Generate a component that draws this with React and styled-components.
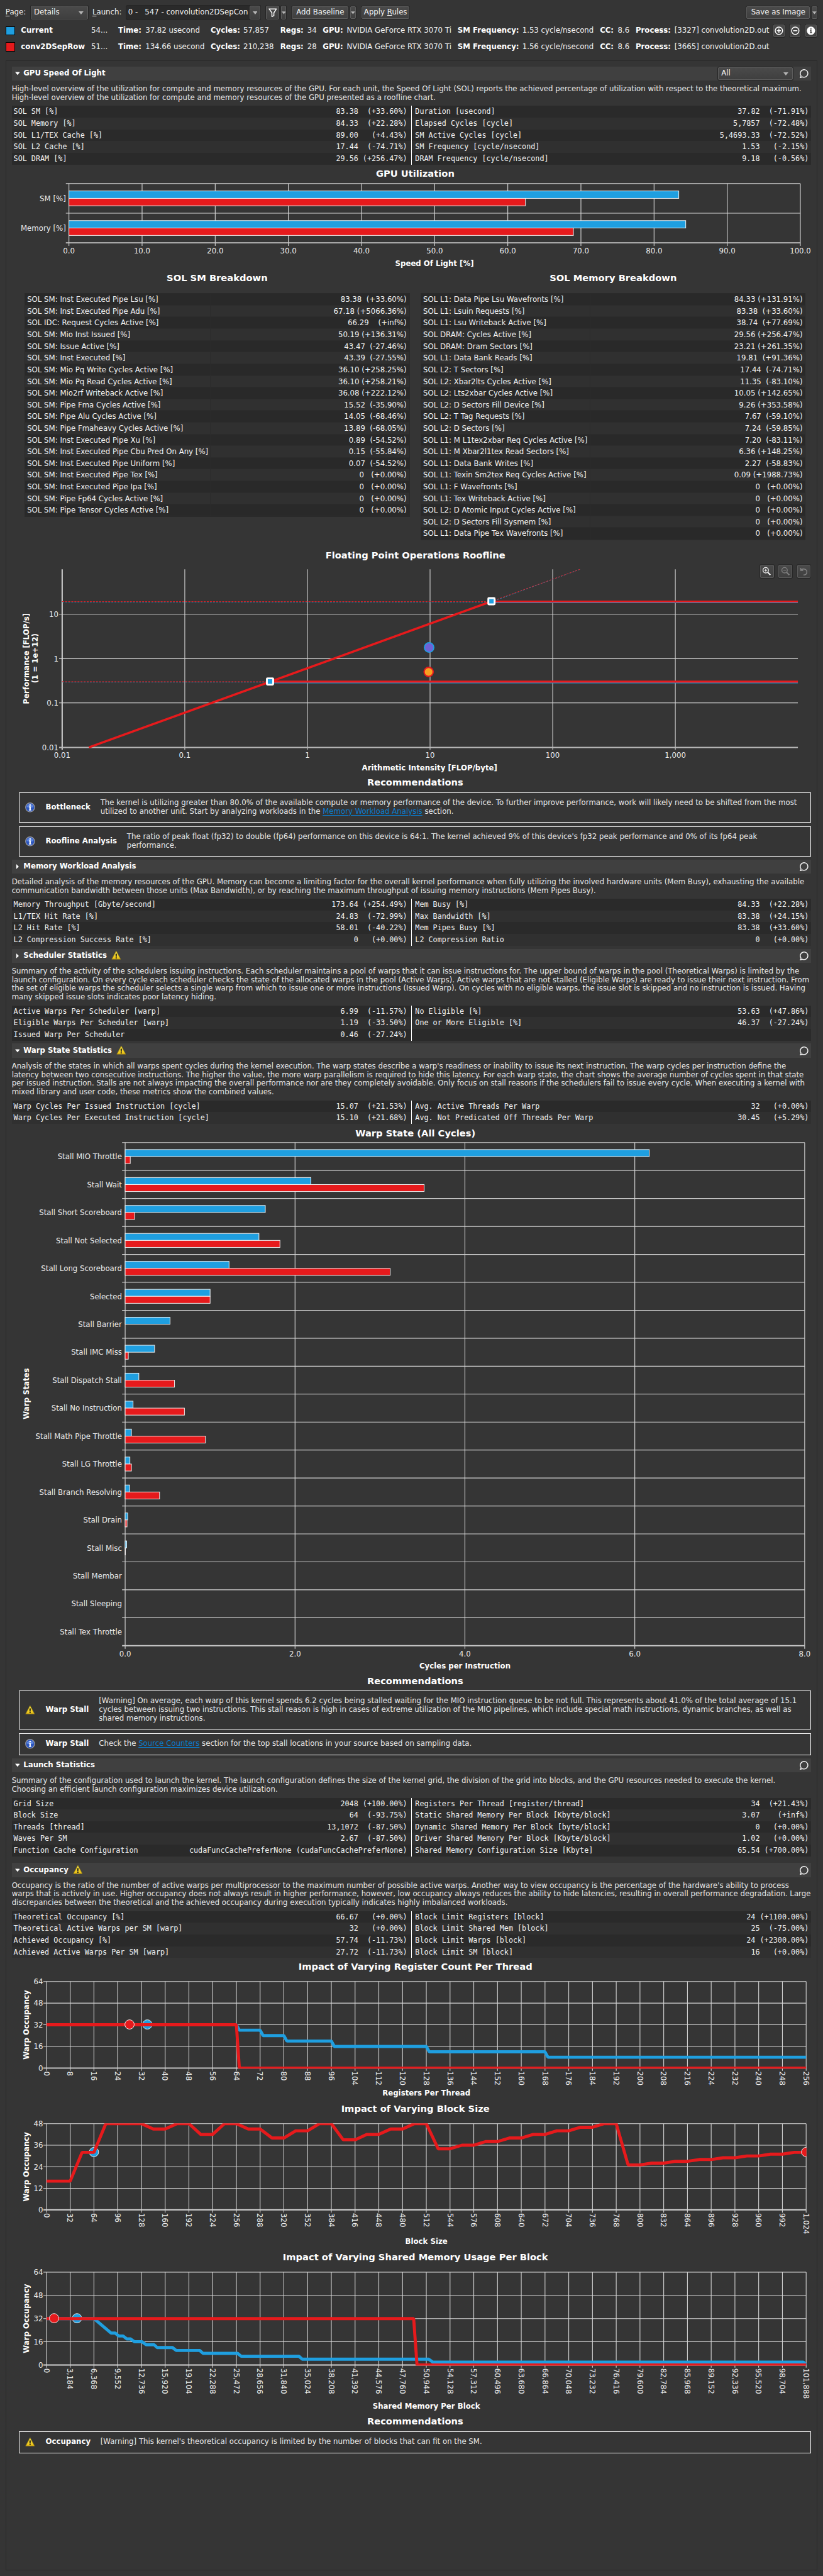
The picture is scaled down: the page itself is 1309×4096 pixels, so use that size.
import React from "react";
import styled, { createGlobalStyle } from "styled-components";

const BLUE = "#1f9fe0";
const RED = "#e61a1c";
const GRID = "#d6d6d6";
const SANS = '"DejaVu Sans", Verdana, sans-serif';
const MONO = '"DejaVu Sans Mono", monospace';

const GlobalStyle = createGlobalStyle`
  * { box-sizing: border-box; }
  html, body { margin: 0; padding: 0; background: #353535; }
  body { overflow: hidden; }
`;

const Page = styled.div`
  zoom: 0.9797;
  width: 1336px;
  height: 4181px;
  padding: 9px 9px 0;
  background: #353535;
  color: #f2f2f2;
  font: 12px/14px ${SANS};
  white-space: nowrap;
`;

/* ---------- toolbar ---------- */

const Toolbar = styled.div`
  display: flex;
  align-items: center;
  height: 23px;
  font-size: 12px;
`;

const ToolLabel = styled.span`
  width: ${(p) => p.$w}px;
  margin-left: ${(p) => p.$ml || 0}px;
  u { text-underline-offset: 2px; }
`;

const Button = styled.button`
  display: flex;
  align-items: center;
  justify-content: ${(p) => (p.$spread ? "space-between" : "center")};
  width: ${(p) => p.$w}px;
  height: ${(p) => p.$h || 21}px;
  margin: 0 0 0 ${(p) => p.$ml || 0}px;
  padding: ${(p) => (p.$spread ? "0 6px 0 4px" : "0")};
  color: ${(p) => (p.$dim ? "#808080" : "#f2f2f2")};
  font: 12px/14px ${SANS};
  background: linear-gradient(#4a4a4a, #3f3f3f);
  border: 1px solid #5c5c5c;
  border-radius: 2px;
  box-shadow: 0 0 0 1px #262626;
`;

const Combo = styled.div`
  display: flex;
  align-items: center;
  width: 218px;
  height: 22px;
  margin-left: 1px;
  background: #2a2a2a;
  border-radius: 2px;
  box-shadow: 0 0 0 1px #262626;
  white-space: pre;
`;

const ComboText = styled.span`
  flex: 1;
  overflow: hidden;
  padding-left: 3px;
`;

const Spacer = styled.div`
  flex: 1;
`;

const Arrow = () => (
  <svg width="8" height="5" viewBox="0 0 8 5">
    <path d="M0 0H8L4 5Z" fill="#b4b4b4" />
  </svg>
);

/* ---------- launch legend ---------- */

const Legend = styled.div`
  display: grid;
  grid-template-columns: 25px 114px 44px 44px 106px 53px 60px 44px 25px 39px 180px 105px 126px 29px 29px 63px 161px 26px 26px 18px;
  grid-auto-rows: 26px;
  align-items: center;
  margin-top: 5px;
  strong { color: #fff; }
`;

const Swatch = styled.i`
  width: 15px;
  height: 15px;
  background: ${(p) => p.$color};
  border: 1px solid #000;
`;

const Blank = styled.span`
  grid-column: span 3;
`;

/* ---------- report panel ---------- */

const Panel = styled.main`
  margin-top: 9px;
  height: 4074px;
  padding: 9px 9px 0;
  border: 1px solid #292929;
`;

const Header = styled.header`
  display: flex;
  align-items: center;
  height: 23px;
  margin-top: ${(p) => p.$mt || 0}px;
  padding: 0 4px 0 5px;
  background: #404040;
  font-weight: bold;
  color: #fff;
`;

const Disclosure = styled.span`
  display: flex;
  width: 14px;
`;

const HeaderIcon = styled.span`
  display: flex;
  margin-left: 7px;
  padding-bottom: 2px;
`;

const FilterBox = styled.span`
  display: flex;
  margin-right: 10px;
`;

const Description = styled.p`
  margin: 0;
  padding: 7px 0 6px;
  color: #e8e8e8;
`;

const MetricTable = styled.section`
  display: grid;
  grid-template-columns: 649px 649px;
  font-family: ${MONO};
  background: #2a2a2a;
`;

const MetricColumn = styled.div`
  border-left: ${(p) => (p.$second ? "1px solid #fff" : "none")};
`;

const MetricRow = styled.div`
  display: flex;
  justify-content: space-between;
  height: 19px;
  padding: 0 ${(p) => (p.$second ? 4 : 7)}px 0 ${(p) => (p.$second ? 5 : 3)}px;
  line-height: 19px;
  white-space: pre;
  background: ${(p) => (p.$alt ? "#303030" : "#2a2a2a")};
`;

const Breakdowns = styled.section`
  display: grid;
  grid-template-columns: 625px 625px;
  column-gap: 18px;
  height: 448px;
  padding-left: 21px;
  align-items: start;
`;

const BlockTitle = styled.h2`
  margin: 0;
  height: ${(p) => p.$h}px;
  padding-left: ${(p) => p.$shift || 0}px;
  text-align: center;
  font: bold 15px/18px ${SANS};
  color: #fff;
`;

const BreakdownTable = styled.div`
  border: 1px solid #2a2a2a;
`;

const BreakdownRow = styled.div`
  display: grid;
  grid-template-columns: ${(p) => p.$split}px 1fr;
  height: 19px;
  line-height: 19px;
  background: ${(p) => (p.$alt ? "#303030" : "#292929")};
  border-bottom: 1px solid #2c2c2c;
  white-space: pre;
`;

const BreakdownCell = styled.span`
  height: 18px;
  padding: 0 4px 0 ${(p) => (p.$value ? 0 : 3)}px;
  text-align: ${(p) => (p.$value ? "right" : "left")};
  border-left: ${(p) => (p.$value ? "1px solid #2b2b2b" : "none")};
`;

const ChartFrame = styled.figure`
  position: relative;
  margin: 0;
  height: ${(p) => p.$h}px;
`;

const ChartSvg = styled.svg`
  display: block;
  font: 12px ${SANS};
  fill: #f0f0f0;
  overflow: hidden;
`;

const ChartTools = styled.div`
  position: absolute;
  right: 1px;
  top: ${(p) => p.$top}px;
  display: flex;
  gap: 8px;
`;

const Advice = styled.div`
  display: flex;
  align-items: center;
  width: 1286px;
  height: ${(p) => (p.$lines === 1 ? 36 : p.$lines * 14 + 21)}px;
  margin: 0 0 ${(p) => (p.$last ? 0 : 6)}px 12px;
  padding-left: 9px;
  border: 1px solid #fff;
  color: #e8e8e8;
`;

const AdviceName = styled.strong`
  width: ${(p) => p.$w}px;
  margin-left: 17px;
  color: #fff;
`;

const Link = styled.a`
  color: #0a7bcb;
  text-decoration: underline;
  text-underline-offset: 2px;
`;

/* ---------- icons ---------- */

const Comment = () => (
  <svg width="16" height="16" viewBox="0 0 16 16" fill="none" stroke="#f2f2f2" strokeWidth="1.5">
    <path d="M3.1 11.6A6.2 6.2 0 1 1 5.6 13.6L1.8 14.6Q3.2 13.3 3.1 11.6Z" strokeLinejoin="round" />
  </svg>
);

const Warning = () => (
  <svg width="16" height="16" viewBox="0 0 16 16">
    <defs>
      <linearGradient id="warn" x1="0" y1="0" x2="0" y2="1">
        <stop offset="0" stopColor="#fff04a" />
        <stop offset="1" stopColor="#e9bd12" />
      </linearGradient>
    </defs>
    <path d="M8 1L15.2 14.5H.8Z" fill="url(#warn)" stroke="#8f7a1c" strokeWidth=".9" strokeLinejoin="round" />
    <path d="M6.9 5.6H9.1L8.8 10.6H7.2Z" fill="#1c1c1c" />
    <rect x="7" y="11.5" width="2" height="1.8" fill="#1c1c1c" />
  </svg>
);

const Info = () => (
  <svg width="16" height="16" viewBox="0 0 16 16">
    <circle cx="8" cy="8" r="7.3" fill="#2c56bd" stroke="#9b9da3" strokeWidth="1.2" />
    <path d="M2.4 7.5A5.7 5.7 0 0 1 13.6 7.5Q8 9.5 2.4 7.5Z" fill="#5b84df" />
    <rect x="6.9" y="3" width="2.2" height="2.2" fill="#fff" />
    <path d="M6.2 6.4H9.1V11.8H10V13H6V11.8H6.9V7.6H6.2Z" fill="#fff" />
  </svg>
);

const Funnel = () => (
  <svg width="14" height="15" viewBox="0 0 14 15" fill="none" stroke="#fff" strokeWidth="1.5" strokeLinejoin="round">
    <path d="M1 1.2H13L8.8 7.4V12.2L5.6 13.6V7.4Z" />
  </svg>
);

const RoundIcon = ({ kind }) => (
  <svg width="14" height="14" viewBox="0 0 14 14" fill="none" stroke="#fff" strokeWidth="1.5">
    <circle cx="7" cy="7" r="6" fill={kind === "info" ? "#fff" : "none"} />
    {kind !== "info" && <path d="M3.6 7H10.4" />}
    {kind === "plus" && <path d="M7 3.6V10.4" />}
    {kind === "info" && <path d="M7 3V4.8M5.7 6.4H7V10M5.4 10.2H8.7" stroke="#3c3c3c" />}
  </svg>
);

const Magnifier = ({ plus }) => (
  <svg width="15" height="15" viewBox="0 0 15 15" fill="none" stroke="currentColor" strokeWidth="1.4">
    <circle cx="6" cy="5.8" r="4.4" />
    <path d="M9.2 9.2L13.6 13.6" strokeWidth="2" />
    <path d={plus ? "M3.9 5.8H8.1M6 3.7V7.9" : "M3.9 5.8H8.1"} strokeWidth="1.2" />
  </svg>
);

const Undo = () => (
  <svg width="14" height="14" viewBox="0 0 14 14" fill="none" stroke="currentColor" strokeWidth="1.6">
    <path d="M1.6 1V5H5.6M2 4.6C5.2 1.2 11.6 2.6 11.6 7.6C11.6 10.6 9.4 12.4 6 12.6" />
  </svg>
);

const Triangle = ({ open }) => (
  <svg width="8" height="8" viewBox="0 0 8 8">
    <path d={open ? "M0 1.5H8L4 6.5Z" : "M2 0L6 4L2 8Z"} fill="#fff" />
  </svg>
);

/* ---------- composed parts ---------- */

const SectionHeader = ({ title, open, warning, mt, children }) => (
  <Header $mt={mt}>
    <Disclosure><Triangle open={open} /></Disclosure>
    {title}
    {warning && <HeaderIcon><Warning /></HeaderIcon>}
    <Spacer />
    {children}
    <Comment />
  </Header>
);

const format = (value, pct) => `${value} ${pct.padStart(10)}`;

const Metrics = ({ left, right }) => {
  const column = (rows, second) => (
    <MetricColumn $second={second}>
      {rows.map(([name, value, pct], i) => (
        <MetricRow key={name} $alt={i % 2 === 1} $second={second}>
          <span>{name}</span>
          <span>{format(value, pct)}</span>
        </MetricRow>
      ))}
    </MetricColumn>
  );
  return (
    <MetricTable>
      {column(left, false)}
      {column(right, true)}
    </MetricTable>
  );
};

const Breakdown = ({ title, rows, split, shift }) => (
  <div>
    <BlockTitle $h={34} $shift={shift}>{title}</BlockTitle>
    <BreakdownTable>
      {rows.map(([name, value, pct], i) => (
        <BreakdownRow key={name} $alt={i % 2 === 1} $split={split}>
          <BreakdownCell>{name} [%]</BreakdownCell>
          <BreakdownCell $value>{format(value, pct)}</BreakdownCell>
        </BreakdownRow>
      ))}
    </BreakdownTable>
  </div>
);

const Chart = ({ top, height, children, tools }) => (
  <ChartFrame $h={height}>
    <ChartSvg width="1298" height={height} viewBox={`19 ${top} 1298 ${height}`}>{children}</ChartSvg>
    {tools}
  </ChartFrame>
);

const T = ({ x, y, a = "middle", b, size = 12, r, children }) => (
  <text
    x={r ? 0 : x}
    y={r ? 0 : y + size * 0.365}
    transform={r ? `translate(${x} ${y}) rotate(${r})` : undefined}
    dy={r ? size * 0.365 : undefined}
    textAnchor={a}
    fontWeight={b ? "bold" : "normal"}
    fontSize={size}
    fill={b ? "#fff" : "#ececec"}
  >
    {children}
  </text>
);

const range = (n) => Array.from({ length: n }, (_, i) => i);

/* ---------- data ---------- */

const solLeft = [
  ["SOL SM [%]", "83.38", "(+33.60%)"],
  ["SOL Memory [%]", "84.33", "(+22.28%)"],
  ["SOL L1/TEX Cache [%]", "89.00", "(+4.43%)"],
  ["SOL L2 Cache [%]", "17.44", "(-74.71%)"],
  ["SOL DRAM [%]", "29.56", "(+256.47%)"],
];
const solRight = [
  ["Duration [usecond]", "37.82", "(-71.91%)"],
  ["Elapsed Cycles [cycle]", "5,7857", "(-72.48%)"],
  ["SM Active Cycles [cycle]", "5,4693.33", "(-72.52%)"],
  ["SM Frequency [cycle/nsecond]", "1.53", "(-2.15%)"],
  ["DRAM Frequency [cycle/nsecond]", "9.18", "(-0.56%)"],
];
const smRows = [
  ["SOL SM: Inst Executed Pipe Lsu", "83.38", "(+33.60%)"],
  ["SOL SM: Inst Executed Pipe Adu", "67.18", "(+5066.36%)"],
  ["SOL IDC: Request Cycles Active", "66.29", "(+inf%)"],
  ["SOL SM: Mio Inst Issued", "50.19", "(+136.31%)"],
  ["SOL SM: Issue Active", "43.47", "(-27.46%)"],
  ["SOL SM: Inst Executed", "43.39", "(-27.55%)"],
  ["SOL SM: Mio Pq Write Cycles Active", "36.10", "(+258.25%)"],
  ["SOL SM: Mio Pq Read Cycles Active", "36.10", "(+258.21%)"],
  ["SOL SM: Mio2rf Writeback Active", "36.08", "(+222.12%)"],
  ["SOL SM: Pipe Fma Cycles Active", "15.52", "(-35.90%)"],
  ["SOL SM: Pipe Alu Cycles Active", "14.05", "(-68.46%)"],
  ["SOL SM: Pipe Fmaheavy Cycles Active", "13.89", "(-68.05%)"],
  ["SOL SM: Inst Executed Pipe Xu", "0.89", "(-54.52%)"],
  ["SOL SM: Inst Executed Pipe Cbu Pred On Any", "0.15", "(-55.84%)"],
  ["SOL SM: Inst Executed Pipe Uniform", "0.07", "(-54.52%)"],
  ["SOL SM: Inst Executed Pipe Tex", "0", "(+0.00%)"],
  ["SOL SM: Inst Executed Pipe Ipa", "0", "(+0.00%)"],
  ["SOL SM: Pipe Fp64 Cycles Active", "0", "(+0.00%)"],
  ["SOL SM: Pipe Tensor Cycles Active", "0", "(+0.00%)"],
];
const memRows = [
  ["SOL L1: Data Pipe Lsu Wavefronts", "84.33", "(+131.91%)"],
  ["SOL L1: Lsuin Requests", "83.38", "(+33.60%)"],
  ["SOL L1: Lsu Writeback Active", "38.74", "(+77.69%)"],
  ["SOL DRAM: Cycles Active", "29.56", "(+256.47%)"],
  ["SOL DRAM: Dram Sectors", "23.21", "(+261.35%)"],
  ["SOL L1: Data Bank Reads", "19.81", "(+91.36%)"],
  ["SOL L2: T Sectors", "17.44", "(-74.71%)"],
  ["SOL L2: Xbar2lts Cycles Active", "11.35", "(-83.10%)"],
  ["SOL L2: Lts2xbar Cycles Active", "10.05", "(+142.65%)"],
  ["SOL L2: D Sectors Fill Device", "9.26", "(+353.58%)"],
  ["SOL L2: T Tag Requests", "7.67", "(-59.10%)"],
  ["SOL L2: D Sectors", "7.24", "(-59.85%)"],
  ["SOL L1: M L1tex2xbar Req Cycles Active", "7.20", "(-83.11%)"],
  ["SOL L1: M Xbar2l1tex Read Sectors", "6.36", "(+148.25%)"],
  ["SOL L1: Data Bank Writes", "2.27", "(-58.83%)"],
  ["SOL L1: Texin Sm2tex Req Cycles Active", "0.09", "(+1988.73%)"],
  ["SOL L1: F Wavefronts", "0", "(+0.00%)"],
  ["SOL L1: Tex Writeback Active", "0", "(+0.00%)"],
  ["SOL L2: D Atomic Input Cycles Active", "0", "(+0.00%)"],
  ["SOL L2: D Sectors Fill Sysmem", "0", "(+0.00%)"],
  ["SOL L1: Data Pipe Tex Wavefronts", "0", "(+0.00%)"],
];
const warpStates = [
  ["Stall MIO Throttle", 6.17, 0.06],
  ["Stall Wait", 2.187, 3.52],
  ["Stall Short Scoreboard", 1.65, 0.111],
  ["Stall Not Selected", 1.575, 1.822],
  ["Stall Long Scoreboard", 1.223, 3.12],
  ["Selected", 1, 1],
  ["Stall Barrier", 0.528, 0],
  ["Stall IMC Miss", 0.346, 0.037],
  ["Stall Dispatch Stall", 0.161, 0.581],
  ["Stall No Instruction", 0.093, 0.698],
  ["Stall Math Pipe Throttle", 0.074, 0.945],
  ["Stall LG Throttle", 0.056, 0.074],
  ["Stall Branch Resolving", 0.052, 0.405],
  ["Stall Drain", 0.03, 0.022],
  ["Stall Misc", 0.018, 0.003],
  ["Stall Membar", 0, 0],
  ["Stall Sleeping", 0, 0],
  ["Stall Tex Throttle", 0, 0],
];
const launches = [
  { color: BLUE, name: "Current", id: "54...", time: "37.82 usecond", cycles: "57,857", regs: 34, freq: "1.53", pid: 3327 },
  { color: RED, name: "conv2DSepRow", id: "51...", time: "134.66 usecond", cycles: "210,238", regs: 28, freq: "1.56", pid: 3665 },
];

/* ---------- charts ---------- */

const BarChart = ({ x0, x1, y0, y1, rows, max, divisions, labelX }) => {
  const h = (y1 - y0) / rows.length;
  const k = (x1 - x0) / max;
  return (
    <g>
      <g stroke={GRID} strokeWidth="1.15">
        {range(divisions + 1).map((i) => {
          const x = x0 + ((x1 - x0) * i) / divisions;
          return <line key={i} x1={x} x2={x} y1={y0} y2={y1 + 5} />;
        })}
        {range(rows.length).map((i) => (
          <line key={i} x1={x0 - 5} x2={x1} y1={y0 + i * h} y2={y0 + i * h} />
        ))}
        <line x1={x0 - 5} x2={x1} y1={y1} y2={y1} strokeWidth="2" stroke="#c8c8c8" />
      </g>
      {rows.map(([name, a, b], i) => (
        <g key={name}>
          <g stroke="#f4f4f4" strokeWidth="1">
            {a > 0 && <rect x={x0} y={y0 + h * (i + 0.25)} width={a * k} height={h / 4} fill={BLUE} />}
            {b > 0 && <rect x={x0} y={y0 + h * (i + 0.5)} width={b * k} height={h / 4} fill={RED} />}
          </g>
          <T x={labelX} y={y0 + h * (i + 0.5)} a="end">{name}</T>
        </g>
      ))}
      {range(divisions + 1).map((i) => (
        <T key={i} x={x0 + ((x1 - x0) * i) / divisions} y={y1 + 12.7}>
          {((max * i) / divisions).toFixed(1)}
        </T>
      ))}
    </g>
  );
};

const Roofline = () => {
  const xs = range(6).map((i) => 100.5 + i * 199.1);
  const ys = [996.7, 1069, 1140.8];
  return (
    <g>
      <T x={674} y={900.7} b size={15}>Floating Point Operations Roofline</T>
      <g stroke={GRID}>
        {xs.map((x, i) => <line key={x} x1={x} x2={x} y1={924} y2={1217} strokeWidth={i ? 1.1 : 2} />)}
        {ys.map((y) => <line key={y} x1={95.5} x2={1295} y1={y} y2={y} strokeWidth="1.2" />)}
        <line x1={95.5} x2={1295} y1={1213} y2={1213} strokeWidth="2" stroke="#b8b8b8" />
      </g>
      <g fill="none">
        <path d="M438 1107.4H1295M797.5 977.4H1295" stroke={BLUE} strokeWidth="3" />
        <path d="M100.5 1107H438M100.5 976.9H797.5M797.5 976.6L941 924" stroke={BLUE} strokeDasharray="3 2" />
        <path d="M100.5 1106.3H438M100.5 976.3H797.5M797.5 976L941 924" stroke={RED} strokeDasharray="3 2" />
        <path d="M144 1213L797.5 976" stroke={RED} strokeWidth="3.6" />
        <path d="M438 1106.3H1295M797.5 976.2H1295" stroke={RED} strokeWidth="3.2" />
      </g>
      {[[438, 1106], [797.5, 975.7]].map(([x, y]) => (
        <rect key={x} x={x - 5.1} y={y - 5.1} width="10.2" height="10.2" rx="1" fill={BLUE} stroke="#fff" strokeWidth="3" />
      ))}
      <circle cx="696.3" cy="1050.8" r="7.7" fill="#6f62d6" stroke={BLUE} strokeWidth="1.8" />
      <circle cx="695.5" cy="1090.4" r="7.4" fill="#f8a022" stroke={RED} strokeWidth="2.2" />
      {["10", "1", "0.1", "0.01"].map((t, i) => <T key={t} x={94.5} y={[...ys, 1213.5][i]} a="end">{t}</T>)}
      {["0.01", "0.1", "1", "10", "100", "1,000"].map((t, i) => <T key={t} x={xs[i]} y={1225.7}>{t}</T>)}
      <T x={697} y={1246} b>Arithmetic Intensity [FLOP/byte]</T>
      <T x={41.8} y={1068.8} r={-90} b>Performance [FLOP/s]</T>
      <T x={56} y={1068.3} r={-90} b>(1 = 1e+12)</T>
    </g>
  );
};

const X0 = 75;
const X1 = 1308.4;

const OccupancyChart = ({ id, title, titleY, y0, y1, maxX, maxY, blue, red, marks, axis, axisY }) => {
  const px = (v) => X0 + (v / maxX) * (X1 - X0);
  const py = (v) => y1 - (v / maxY) * (y1 - y0);
  const line = (pts) => pts.map(([x, y]) => `${px(x).toFixed(2)},${py(y).toFixed(2)}`).join(" ");
  return (
    <g>
      <clipPath id={id}>
        <rect x={X0} y={y0 - 0.5} width={X1 - X0 + 0.5} height={y1 - y0 + 1.5} />
      </clipPath>
      <T x={674} y={titleY} b size={15}>{title}</T>
      <g stroke={GRID}>
        {range(33).map((i) => {
          const x = px((maxX * i) / 32);
          return <line key={i} x1={x} x2={x} y1={y0} y2={y1 + 4.5} strokeWidth="1.1" />;
        })}
        {range(5).map((i) => {
          const y = py((maxY * i) / 4);
          return <line key={i} x1={X0 - 5} x2={X1} y1={y} y2={y} strokeWidth={i ? 1.1 : 2} />;
        })}
      </g>
      <g clipPath={`url(#${id})`}>
        {blue && <polyline points={line(blue)} fill="none" stroke={BLUE} strokeWidth="5" strokeLinejoin="bevel" />}
        <circle cx={px(marks[0][0])} cy={py(marks[0][1]) - 0.5} r="7.6" fill={BLUE} stroke="#eee" />
        <polyline points={line(red)} fill="none" stroke={RED} strokeWidth="5" strokeLinejoin="bevel" />
        <circle cx={px(marks[1][0])} cy={py(marks[1][1]) - 0.5} r="7.6" fill={RED} stroke="#eee" />
      </g>
      {range(5).map((i) => <T key={i} x={69.5} y={py((maxY * i) / 4)} a="end">{(maxY * i) / 4}</T>)}
      {range(33).map((i) => (
        <T key={i} x={px((maxX * i) / 32)} y={y1 + 5.3} r={90} a="start">
          {((maxX * i) / 32).toLocaleString("en-US")}
        </T>
      ))}
      <T x={691.8} y={axisY} b>{axis}</T>
      <T x={41.8} y={(y0 + y1) / 2} r={-90} b>Warp Occupancy</T>
    </g>
  );
};

const registerBlue = [[0, 32], [64, 32], [65, 28], [72, 28], [73, 24], [80, 24], [81, 20], [96, 20], [97, 16], [128, 16], [129, 12], [168, 12], [169, 8], [256, 8]];
const registerRed = [[0, 32], [64, 32], [65, 0], [256, 0]];
const blockOccupancy = range(65).map((k) => {
  const warps = Math.max(1, Math.ceil(k / 2));
  return [k * 16, warps * Math.min(16, Math.floor(48 / warps))];
});
const sharedBlue = [
  [0, 32], [6368, 32], [8660, 22], [9220, 22], [9700, 20], [10280, 20], [10760, 18], [11270, 18], [11800, 16], [12820, 16],
  [13370, 14], [14430, 14], [14850, 12], [16900, 12], [17400, 10], [20560, 10], [21000, 8], [25630, 8], [26120, 6],
  [33870, 6], [34300, 4], [51260, 4], [51800, 2], [101500, 2], [101888, 0],
];
const sharedRed = [[0, 32], [49250, 32], [49700, 0], [101888, 0]];

export default function App() {
  return (
    <>
      <GlobalStyle />
      <Page>
        <Toolbar>
          <ToolLabel $w={41}><u>P</u>age:</ToolLabel>
          <Button $w={93} $h={22} $spread>Details<Arrow /></Button>
          <ToolLabel $w={54} $ml={7}><u>L</u>aunch:</ToolLabel>
          <Combo>
            <ComboText>0 -   547 - convolution2DSepCon</ComboText>
            <Button $w={18} $h={22}><Arrow /></Button>
          </Combo>
          <Button $w={21} $h={22} $ml={9}><Funnel /></Button>
          <Button $w={9} $h={22} $ml={3}><Arrow /></Button>
          <Button $w={92} $ml={9}>Add Baseline</Button>
          <Button $w={9} $ml={3}><Arrow /></Button>
          <Button $w={78} $ml={9}><span>Apply <u>R</u>ules</span></Button>
          <Spacer />
          <Button $w={103}>Save as Image</Button>
          <Button $w={9} $ml={3}><Arrow /></Button>
        </Toolbar>

        <Legend>
          {launches.map((l, i) => (
            <React.Fragment key={l.name}>
              <Swatch $color={l.color} />
              <strong>{l.name}</strong>
              <span>{l.id}</span>
              <strong>Time:</strong>
              <span>{l.time}</span>
              <strong>Cycles:</strong>
              <span>{l.cycles}</span>
              <strong>Regs:</strong>
              <span>{l.regs}</span>
              <strong>GPU:</strong>
              <span>NVIDIA GeForce RTX 3070 Ti</span>
              <strong>SM Frequency:</strong>
              <span>{l.freq} cycle/nsecond</span>
              <strong>CC:</strong>
              <span>8.6</span>
              <strong>Process:</strong>
              <span>[{l.pid}] convolution2D.out</span>
              {i === 0 ? (
                <>
                  <Button $w={18}><RoundIcon kind="plus" /></Button>
                  <Button $w={18}><RoundIcon kind="minus" /></Button>
                  <Button $w={18}><RoundIcon kind="info" /></Button>
                </>
              ) : (
                <Blank />
              )}
            </React.Fragment>
          ))}
        </Legend>

        <Panel>
          <SectionHeader title="GPU Speed Of Light" open>
            <FilterBox><Button $w={121} $h={20} $spread>All<Arrow /></Button></FilterBox>
          </SectionHeader>
          <Description>
            High-level overview of the utilization for compute and memory resources of the GPU. For each unit, the Speed Of Light (SOL) reports the achieved percentage of utilization with respect to the theoretical maximum.<br />
            High-level overview of the utilization for compute and memory resources of the GPU presented as a roofline chart.
          </Description>
          <Metrics left={solLeft} right={solRight} />

          <Chart top={267} height={175}>
            <T x={673.7} y={281.3} b size={15}>GPU Utilization</T>
            <BarChart
              x0={111.5} x1={1299} y0={297.5} y1={393.7} max={100} divisions={10} labelX={106.5}
              rows={[["SM [%]", 83.38, 62.41], ["Memory [%]", 84.33, 68.97]]}
            />
            <T x={705} y={427} b>Speed Of Light [%]</T>
          </Chart>

          <Breakdowns>
            <Breakdown title="SOL SM Breakdown" rows={smRows} split={300} />
            <Breakdown title="SOL Memory Breakdown" rows={memRows} split={273} />
          </Breakdowns>

          <Chart
            top={890}
            height={371}
            tools={
              <ChartTools $top={27}>
                <Button $w={22}><Magnifier plus /></Button>
                <Button $w={22} $dim><Magnifier /></Button>
                <Button $w={22} $dim><Undo /></Button>
              </ChartTools>
            }
          >
            <Roofline />
          </Chart>

          <BlockTitle $h={25} $shift={12}>Recommendations</BlockTitle>
          <Advice $lines={2}>
            <Info />
            <AdviceName $w={89}>Bottleneck</AdviceName>
            <span>
              The kernel is utilizing greater than 80.0% of the available compute or memory performance of the device. To further improve performance, work will likely need to be shifted from the most<br />
              utilized to another unit. Start by analyzing workloads in the <Link>Memory Workload Analysis</Link> section.
            </span>
          </Advice>
          <Advice $lines={2} $last>
            <Info />
            <AdviceName $w={132}>Roofline Analysis</AdviceName>
            <span>
              The ratio of peak float (fp32) to double (fp64) performance on this device is 64:1. The kernel achieved 9% of this device's fp32 peak performance and 0% of its fp64 peak<br />
              performance.
            </span>
          </Advice>

          <SectionHeader title="Memory Workload Analysis" mt={5} />
          <Description>
            Detailed analysis of the memory resources of the GPU. Memory can become a limiting factor for the overall kernel performance when fully utilizing the involved hardware units (Mem Busy), exhausting the available<br />
            communication bandwidth between those units (Max Bandwidth), or by reaching the maximum throughput of issuing memory instructions (Mem Pipes Busy).
          </Description>
          <Metrics
            left={[
              ["Memory Throughput [Gbyte/second]", "173.64", "(+254.49%)"],
              ["L1/TEX Hit Rate [%]", "24.83", "(-72.99%)"],
              ["L2 Hit Rate [%]", "58.01", "(-40.22%)"],
              ["L2 Compression Success Rate [%]", "0", "(+0.00%)"],
            ]}
            right={[
              ["Mem Busy [%]", "84.33", "(+22.28%)"],
              ["Max Bandwidth [%]", "83.38", "(+24.15%)"],
              ["Mem Pipes Busy [%]", "83.38", "(+33.60%)"],
              ["L2 Compression Ratio", "0", "(+0.00%)"],
            ]}
          />

          <SectionHeader title="Scheduler Statistics" warning mt={5} />
          <Description>
            Summary of the activity of the schedulers issuing instructions. Each scheduler maintains a pool of warps that it can issue instructions for. The upper bound of warps in the pool (Theoretical Warps) is limited by the<br />
            launch configuration. On every cycle each scheduler checks the state of the allocated warps in the pool (Active Warps). Active warps that are not stalled (Eligible Warps) are ready to issue their next instruction. From<br />
            the set of eligible warps the scheduler selects a single warp from which to issue one or more instructions (Issued Warp). On cycles with no eligible warps, the issue slot is skipped and no instruction is issued. Having<br />
            many skipped issue slots indicates poor latency hiding.
          </Description>
          <Metrics
            left={[
              ["Active Warps Per Scheduler [warp]", "6.99", "(-11.57%)"],
              ["Eligible Warps Per Scheduler [warp]", "1.19", "(-33.50%)"],
              ["Issued Warp Per Scheduler", "0.46", "(-27.24%)"],
            ]}
            right={[
              ["No Eligible [%]", "53.63", "(+47.86%)"],
              ["One or More Eligible [%]", "46.37", "(-27.24%)"],
            ]}
          />

          <SectionHeader title="Warp State Statistics" open warning mt={5} />
          <Description>
            Analysis of the states in which all warps spent cycles during the kernel execution. The warp states describe a warp's readiness or inability to issue its next instruction. The warp cycles per instruction define the<br />
            latency between two consecutive instructions. The higher the value, the more warp parallelism is required to hide this latency. For each warp state, the chart shows the average number of cycles spent in that state<br />
            per issued instruction. Stalls are not always impacting the overall performance nor are they completely avoidable. Only focus on stall reasons if the schedulers fail to issue every cycle. When executing a kernel with<br />
            mixed library and user code, these metrics show the combined values.
          </Description>
          <Metrics
            left={[
              ["Warp Cycles Per Issued Instruction [cycle]", "15.07", "(+21.53%)"],
              ["Warp Cycles Per Executed Instruction [cycle]", "15.10", "(+21.68%)"],
            ]}
            right={[
              ["Avg. Active Threads Per Warp", "32", "(+0.00%)"],
              ["Avg. Not Predicated Off Threads Per Warp", "30.45", "(+5.29%)"],
            ]}
          />

          <Chart top={1824} height={895}>
            <T x={674} y={1838.5} b size={15}>Warp State (All Cycles)</T>
            <BarChart x0={202.8} x1={1306} y0={1854.4} y1={2671} max={8} divisions={4} labelX={197.5} rows={warpStates} />
            <T x={754.4} y={2703.7} b>Cycles per Instruction</T>
            <T x={41.8} y={2262} r={-90} b>Warp States</T>
          </Chart>

          <BlockTitle $h={25} $shift={12}>Recommendations</BlockTitle>
          <Advice $lines={3}>
            <Warning />
            <AdviceName $w={86.5}>Warp Stall</AdviceName>
            <span>
              [Warning] On average, each warp of this kernel spends 6.2 cycles being stalled waiting for the MIO instruction queue to be not full. This represents about 41.0% of the total average of 15.1<br />
              cycles between issuing two instructions. This stall reason is high in cases of extreme utilization of the MIO pipelines, which include special math instructions, dynamic branches, as well as<br />
              shared memory instructions.
            </span>
          </Advice>
          <Advice $lines={1} $last>
            <Info />
            <AdviceName $w={86.5}>Warp Stall</AdviceName>
            <span>Check the <Link>Source Counters</Link> section for the top stall locations in your source based on sampling data.</span>
          </Advice>

          <SectionHeader title="Launch Statistics" open mt={5} />
          <Description>
            Summary of the configuration used to launch the kernel. The launch configuration defines the size of the kernel grid, the division of the grid into blocks, and the GPU resources needed to execute the kernel.<br />
            Choosing an efficient launch configuration maximizes device utilization.
          </Description>
          <Metrics
            left={[
              ["Grid Size", "2048", "(+100.00%)"],
              ["Block Size", "64", "(-93.75%)"],
              ["Threads [thread]", "13,1072", "(-87.50%)"],
              ["Waves Per SM", "2.67", "(-87.50%)"],
              ["Function Cache Configuration", "cudaFuncCachePreferNone", "(cudaFuncCachePreferNone)"],
            ]}
            right={[
              ["Registers Per Thread [register/thread]", "34", "(+21.43%)"],
              ["Static Shared Memory Per Block [Kbyte/block]", "3.07", "(+inf%)"],
              ["Dynamic Shared Memory Per Block [byte/block]", "0", "(+0.00%)"],
              ["Driver Shared Memory Per Block [Kbyte/block]", "1.02", "(+0.00%)"],
              ["Shared Memory Configuration Size [Kbyte]", "65.54", "(+700.00%)"],
            ]}
          />

          <SectionHeader title="Occupancy" open warning mt={11} />
          <Description>
            Occupancy is the ratio of the number of active warps per multiprocessor to the maximum number of possible active warps. Another way to view occupancy is the percentage of the hardware's ability to process<br />
            warps that is actively in use. Higher occupancy does not always result in higher performance, however, low occupancy always reduces the ability to hide latencies, resulting in overall performance degradation. Large<br />
            discrepancies between the theoretical and the achieved occupancy during execution typically indicates highly imbalanced workloads.
          </Description>
          <Metrics
            left={[
              ["Theoretical Occupancy [%]", "66.67", "(+0.00%)"],
              ["Theoretical Active Warps per SM [warp]", "32", "(+0.00%)"],
              ["Achieved Occupancy [%]", "57.74", "(-11.73%)"],
              ["Achieved Active Warps Per SM [warp]", "27.72", "(-11.73%)"],
            ]}
            right={[
              ["Block Limit Registers [block]", "24", "(+1100.00%)"],
              ["Block Limit Shared Mem [block]", "25", "(-75.00%)"],
              ["Block Limit Warps [block]", "24", "(+2300.00%)"],
              ["Block Limit SM [block]", "16", "(+0.00%)"],
            ]}
          />

          <Chart top={3178} height={230}>
            <OccupancyChart
              id="registers" title="Impact of Varying Register Count Per Thread" titleY={3192.3} y0={3216.5} y1={3357}
              maxX={256} maxY={64} blue={registerBlue} red={registerRed} marks={[[34, 32], [28, 32]]}
              axis="Registers Per Thread" axisY={3396.9}
            />
          </Chart>
          <Chart top={3408} height={241}>
            <OccupancyChart
              id="blocks" title="Impact of Varying Block Size" titleY={3422.3} y0={3446.5} y1={3586.4}
              maxX={1024} maxY={48} red={blockOccupancy} marks={[[64, 32], [1024, 32]]}
              axis="Block Size" axisY={3637.7}
            />
          </Chart>
          <Chart top={3649} height={272}>
            <OccupancyChart
              id="shared" title="Impact of Varying Shared Memory Usage Per Block" titleY={3663.3} y0={3687.7} y1={3838.3}
              maxX={101888} maxY={64} blue={sharedBlue} red={sharedRed} marks={[[4096, 32], [1024, 32]]}
              axis="Shared Memory Per Block" axisY={3904.7}
            />
          </Chart>

          <BlockTitle $h={25} $shift={12}>Recommendations</BlockTitle>
          <Advice $lines={1} $last>
            <Warning />
            <AdviceName $w={89}>Occupancy</AdviceName>
            <span>[Warning] This kernel's theoretical occupancy is limited by the number of blocks that can fit on the SM.</span>
          </Advice>
        </Panel>
      </Page>
    </>
  );
}
